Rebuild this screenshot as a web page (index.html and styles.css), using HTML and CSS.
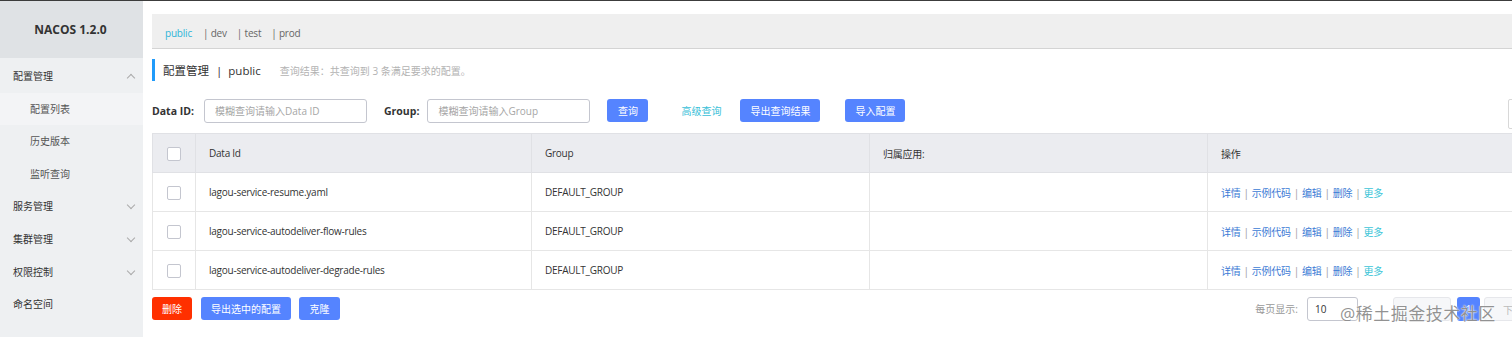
FILE: index.html
```html
<!DOCTYPE html>
<html lang="zh-CN">
<head>
  <meta charset="UTF-8">
  <title>Nacos 配置管理</title>
  <link rel="stylesheet" href="styles.css">
</head>
<body>

<!-- Left navigation -->
<div class="sidebar">
  <div class="brand">NACOS 1.2.0</div>
  <div class="menu">
    <div class="menu-item">配置管理<span class="chev up"></span></div>
    <div class="menu-sub active">配置列表</div>
    <div class="menu-sub">历史版本</div>
    <div class="menu-sub">监听查询</div>
    <div class="menu-item">服务管理<span class="chev"></span></div>
    <div class="menu-item">集群管理<span class="chev"></span></div>
    <div class="menu-item">权限控制<span class="chev"></span></div>
    <div class="menu-item">命名空间</div>
  </div>
</div>

<!-- Main content -->
<div class="main">
  <div class="ns-bar">
    <span class="ns current">public</span>
    <span class="ns">| dev</span>
    <span class="ns">| test</span>
    <span class="ns">| prod</span>
  </div>

  <div class="page-title">
    <span class="title-text">配置管理</span>
    <span class="title-sep">|</span>
    <span class="title-text">public</span>
    <span class="result">查询结果：共查询到 3 条满足要求的配置。</span>
  </div>

  <div class="search-row">
    <label class="field-label">Data ID:</label>
    <input class="field-input" placeholder="模糊查询请输入Data ID">
    <label class="field-label group-label">Group:</label>
    <input class="field-input" placeholder="模糊查询请输入Group">
    <button class="btn btn-query">查询</button>
    <a class="adv-link">高级查询</a>
    <button class="btn btn-export">导出查询结果</button>
    <button class="btn btn-import">导入配置</button>
    <div class="edge-box"></div>
  </div>

  <table class="cfg-table">
    <colgroup>
      <col class="c-check"><col class="c-id"><col class="c-group"><col class="c-app"><col class="c-op">
    </colgroup>
    <thead>
      <tr>
        <th><span class="checkbox"></span></th>
        <th>Data Id</th>
        <th>Group</th>
        <th>归属应用:</th>
        <th>操作</th>
      </tr>
    </thead>
    <tbody>
      <tr>
        <td><span class="checkbox"></span></td>
        <td>lagou-service-resume.yaml</td>
        <td>DEFAULT_GROUP</td>
        <td></td>
        <td class="ops"><a>详情</a><i>|</i><a>示例代码</a><i>|</i><a>编辑</a><i>|</i><a>删除</a><i>|</i><a class="more">更多</a></td>
      </tr>
      <tr>
        <td><span class="checkbox"></span></td>
        <td>lagou-service-autodeliver-flow-rules</td>
        <td>DEFAULT_GROUP</td>
        <td></td>
        <td class="ops"><a>详情</a><i>|</i><a>示例代码</a><i>|</i><a>编辑</a><i>|</i><a>删除</a><i>|</i><a class="more">更多</a></td>
      </tr>
      <tr>
        <td><span class="checkbox"></span></td>
        <td>lagou-service-autodeliver-degrade-rules</td>
        <td>DEFAULT_GROUP</td>
        <td></td>
        <td class="ops"><a>详情</a><i>|</i><a>示例代码</a><i>|</i><a>编辑</a><i>|</i><a>删除</a><i>|</i><a class="more">更多</a></td>
      </tr>
    </tbody>
  </table>

  <div class="footer-row">
    <button class="btn btn-danger">删除</button>
    <button class="btn btn-export-sel">导出选中的配置</button>
    <button class="btn btn-clone">克隆</button>

    <div class="pager">
      <span class="page-size-label">每页显示:</span>
      <span class="page-size">10</span>
      <span class="page-btn prev"></span>
      <span class="page-btn cur">1</span>
      <span class="page-btn next">下一</span>
    </div>
  </div>

  <!-- watermark over the pager -->
  <div class="watermark">@稀土掘金技术社区</div>
</div>

</body>
</html>
```

FILE: styles.css
```css
/* Basic styles */
html, body {
  margin: 0;
  padding: 0;
}

body {
  width: 1512px;
  height: 337px;
  overflow: hidden;
  display: flex;
  border-top: 1px solid #3c3c3c;
  box-sizing: border-box;
  font-family: "Open Sans", "Noto Sans CJK SC", sans-serif;
  font-size: 10px;
  color: #333;
  background: #fff;
}

/* Sidebar */
.sidebar {
  width: 143px;
  flex-shrink: 0;
  background: #eef0f2;
}

.brand {
  height: 57px;
  line-height: 57px;
  background: #dfe2e5;
  text-align: center;
  font-weight: bold;
  font-size: 12px;
  color: #333;
  padding-right: 2px;
}

.menu {
  padding-top: 2px;
}

.menu-item,
.menu-sub {
  height: 32.6px;
  line-height: 32.6px;
  position: relative;
  font-size: 10px;
}

.menu-item {
  padding-left: 13px;
  color: #333;
}

.menu-sub {
  padding-left: 30px;
  color: #555;
}

.menu-sub.active {
  background: #f3f4f6;
}

/* small chevron on the right of a menu item */
.chev {
  position: absolute;
  right: 9px;
  top: 12px;
  width: 5px;
  height: 5px;
  border-right: 1px solid #aaa;
  border-bottom: 1px solid #aaa;
  transform: rotate(45deg);
}

.chev.up {
  top: 15px;
  transform: rotate(-135deg);
}

/* Main area */
.main {
  flex: 1;
  position: relative;
  overflow: hidden;
  padding: 13px 0 0 9px;
}

.ns-bar {
  height: 35px;
  box-sizing: border-box;
  background: #efefef;
  border-bottom: 1px solid #d4d4d4;
  display: flex;
  align-items: center;
  padding: 3px 0 0 13px;
}

.ns {
  font-size: 10px;
  letter-spacing: -0.2px;
  color: #666;
  margin-right: 10px;
}

.ns.current {
  color: #2eb4d8;
  margin-right: 11px;
}

.page-title {
  margin-top: 10px;
  height: 22px;
  border-left: 3px solid #209bfa;
  display: flex;
  align-items: center;
  padding-left: 8px;
}

.title-text {
  font-size: 11.5px;
  color: #333;
}

.title-sep {
  font-size: 11.5px;
  margin: 0 6px 0 7px;
}

.result {
  margin-left: 19px;
  font-size: 10px;
  color: #b3b3b3;
}

/* Search row */
.search-row {
  margin-top: 18px;
  height: 23px;
  display: flex;
  align-items: center;
}

.field-label {
  font-weight: bold;
  font-size: 10.5px;
  color: #333;
  margin-right: 10px;
}

.group-label {
  margin-left: 17px;
  margin-right: 8px;
}

.field-input {
  width: 163px;
  height: 24px;
  box-sizing: border-box;
  border: 1px solid #c4c6cf;
  border-radius: 3px;
  padding: 0 10px;
  font-family: inherit;
  font-size: 10px;
  color: #333;
}

.field-input::placeholder {
  color: #a6a6a6;
}

.btn {
  height: 23px;
  border: none;
  border-radius: 3px;
  background: #5584ff;
  color: #fff;
  font-family: inherit;
  font-size: 10px;
  padding: 0;
  cursor: pointer;
}

.btn-query {
  width: 41px;
  margin-left: 17px;
}

.adv-link {
  margin-left: 33px;
  font-size: 10px;
  color: #38c0d8;
}

.btn-export {
  width: 80px;
  margin-left: 19px;
}

.btn-import {
  width: 60px;
  margin-left: 25px;
}

.edge-box {
  margin-left: auto;
  margin-right: -30px;
  width: 34px;
  height: 30px;
  margin-top: 6px;
  box-sizing: border-box;
  border: 1px solid #d8d8d8;
  border-radius: 2px;
}

/* Table */
.cfg-table {
  margin-top: 11px;
  width: 1393px;
  border-collapse: collapse;
  table-layout: fixed;
}

.c-check { width: 43px; }
.c-id { width: 336px; }
.c-group { width: 338px; }
.c-app { width: 338px; }

.cfg-table th,
.cfg-table td {
  text-align: left;
  font-weight: normal;
  font-size: 10px;
  letter-spacing: -0.25px;
  color: #333;
  padding: 0 0 0 13px;
  border: 1px solid #e6e6e6;
  height: 38px;
  white-space: nowrap;
}

.cfg-table th {
  background: #ebecf0;
  border-color: #e0e1e5;
}

.cfg-table th:first-child,
.cfg-table td:first-child {
  padding-left: 14px;
}

.checkbox {
  display: inline-block;
  width: 12px;
  height: 12px;
  border: 1px solid #c4c6cf;
  border-radius: 2px;
  background: #fff;
  vertical-align: middle;
}

.ops {
  letter-spacing: 0;
}

.ops a {
  color: #3b7bd5;
}

.ops a.more {
  color: #3cc5d8;
}

.ops i {
  font-style: normal;
  color: #999;
  margin: 0 3px;
}

/* Footer */
.footer-row {
  margin-top: 7px;
  height: 23px;
  display: flex;
  align-items: center;
}

.btn-danger {
  background: #ff3000;
  width: 40px;
}

.btn-export-sel {
  width: 90px;
  margin-left: 9px;
}

.btn-clone {
  width: 41px;
  margin-left: 8px;
}

.pager {
  margin-left: auto;
  margin-right: -30px;
  display: flex;
  align-items: center;
}

.page-size-label {
  font-size: 10px;
  color: #999;
  margin-right: 9px;
}

.page-size {
  width: 51px;
  height: 24px;
  line-height: 22px;
  box-sizing: border-box;
  border: 1px solid #c4c6cf;
  border-radius: 3px;
  padding-left: 7px;
  font-size: 10px;
  color: #333;
}

.page-btn {
  height: 24px;
  line-height: 24px;
  box-sizing: border-box;
  border-radius: 3px;
  font-size: 10px;
  text-align: center;
}

.page-btn.prev {
  width: 58px;
  margin-left: 35px;
  background: #f6f7f9;
  border: 1px solid #e6e7eb;
}

.page-btn.cur {
  width: 23px;
  margin-left: 6px;
  background: #5584ff;
  color: #fff;
}

.page-btn.next {
  width: 58px;
  margin-left: 4px;
  background: #f6f7f9;
  border: 1px solid #e6e7eb;
  color: #bbb;
}

.watermark {
  position: absolute;
  left: 1197px;
  top: 299px;
  font-size: 17px;
  color: rgba(110, 110, 110, 0.75);
  text-shadow: 0 0 2px #fff, 0 0 1px #fff;
  letter-spacing: 0.5px;
  white-space: nowrap;
}
```
